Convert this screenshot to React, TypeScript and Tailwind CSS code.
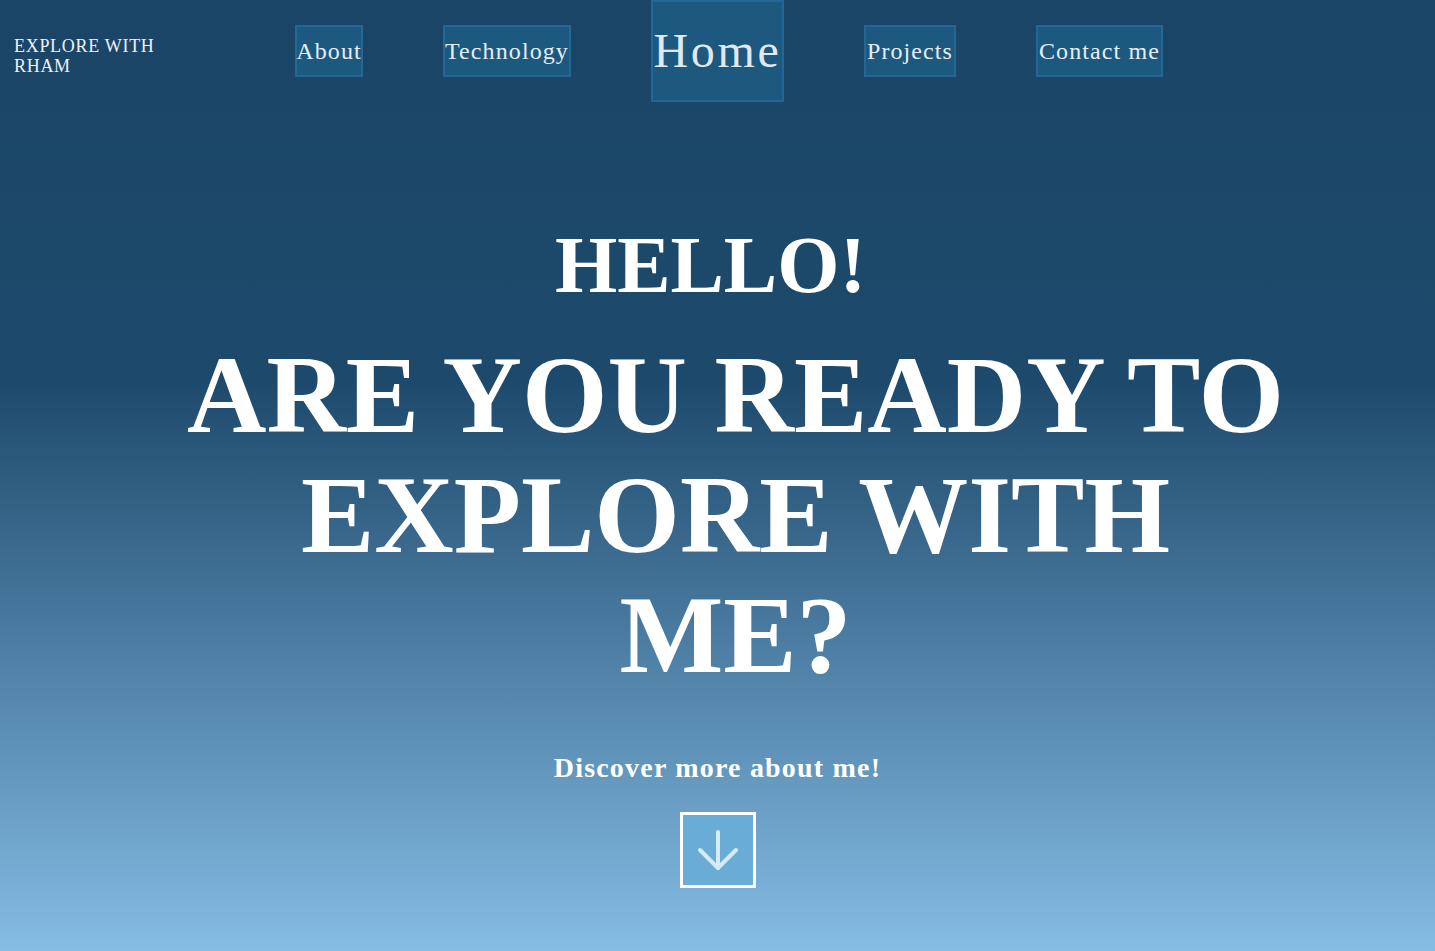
const navItems = [
  { label: "About", width: "w-[68px]", big: false },
  { label: "Technology", width: "w-[128px]", big: false },
  { label: "Home", width: "w-[133px]", big: true },
  { label: "Projects", width: "w-[92px]", big: false },
  { label: "Contact me", width: "w-[127px]", big: false },
];

const NavButton = ({ label, width, big }: { label: string; width: string; big: boolean }) => (
  <a
    href="#"
    className={
      big
        ? `${width} flex h-[102px] items-center justify-center border-2 border-[#236797] bg-[#1d587e] text-[48px] tracking-[2.7px] text-[#e2e8f0]`
        : `${width} mt-[25px] flex h-[52px] items-center justify-center whitespace-nowrap border-2 border-[#236797] bg-[#1d587e] text-[24px] tracking-[1.1px] text-[#e6edf4]`
    }
  >
    {label}
  </a>
);

const App = () => {
  return (
    <div className="flex h-[951px] flex-col bg-linear-to-b from-[#1b4567] via-[#1d4a6c] via-40% to-[#86bde5] font-['Liberation_Serif',serif] text-white">
      <header className="flex items-start">
        <div className="w-[295px] pl-[14px] pt-[36px] text-[18px] leading-[20px] tracking-[0.7px] text-[#eef2f7]">
          EXPLORE WITH
          <br />
          RHAM
        </div>
        <nav className="flex items-start gap-20">
          {navItems.map((item) => (
            <NavButton key={item.label} label={item.label} width={item.width} big={item.big} />
          ))}
        </nav>
      </header>

      <main className="flex flex-col items-center">
        <h2 className="mt-[123px] pr-[14px] text-[80px] font-bold leading-[80px]">HELLO!</h2>
        <h1 className="mt-[30px] pl-[36px] text-center text-[110px] font-bold leading-[120px]">
          ARE YOU READY TO
          <br />
          EXPLORE WITH
          <br />
          ME?
        </h1>
        <p className="mt-[55px] text-[28px] font-bold leading-[36px] tracking-[1.2px]">
          Discover more about me!
        </p>
        <button className="mt-[26px] flex h-[76px] w-[76px] items-center justify-center border-[3px] border-white bg-[#69add7]">
          <svg width="40" height="40" viewBox="0 0 40 40" fill="none" stroke="#d5ebf8" strokeWidth="4" strokeLinecap="round" strokeLinejoin="round">
            <path d="M20 2v36" />
            <path d="M2 20l18 18 18-18" />
          </svg>
        </button>
      </main>
    </div>
  );
};

export default App;
